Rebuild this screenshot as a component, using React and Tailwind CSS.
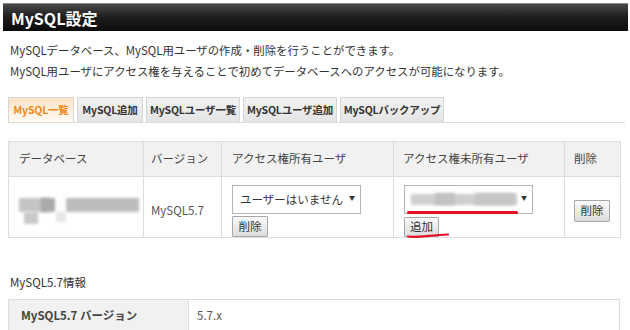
import React from "react";

const btn =
  "inline-flex items-center justify-center border border-[#a8a8a8] bg-gradient-to-b from-[#fafafa] to-[#dcdcdc] text-[11.5px] text-[#333] leading-none rounded-[1px]";

const tabs = [
  { label: "MySQL一覧", w: "w-[66px]", active: true },
  { label: "MySQL追加", w: "w-[66px]" },
  { label: "MySQLユーザ一覧", w: "w-[94px]" },
  { label: "MySQLユーザ追加", w: "w-[94px]" },
  { label: "MySQLバックアップ", w: "w-[104px]" },
];

const Blur = ({ className }) => (
  <span className={"absolute blur-[1.5px] " + className}></span>
);

export default function App() {
  return (
    <div className="w-[630px] h-[330px] overflow-hidden bg-white text-[#333] font-['Noto_Sans_CJK_JP',sans-serif]">
      {/* header bar */}
      <div className="pt-[3px] pl-[3px] pr-[2px]">
        <div className="h-[28px] flex items-center pl-[8px] bg-gradient-to-b from-[#4a4a4a] via-[#1c1c1c] to-[#0c0c0c] text-white font-bold text-[16px] border-t border-[#888]">
          MySQL設定
        </div>
      </div>

      <div className="pl-[10px] pt-[9px] text-[11.4px] leading-[21px] text-[#333] whitespace-nowrap">
        <p>MySQLデータベース、MySQL用ユーザの作成・削除を行うことができます。</p>
        <p>MySQL用ユーザにアクセス権を与えることで初めてデータベースへのアクセスが可能になります。</p>
      </div>

      {/* tabs */}
      <div className="mt-[15px] ml-[8px] mr-[5px] flex items-end gap-[3px] border-b border-[#dcdcdc]">
        {tabs.map((t) => (
          <div
            key={t.label}
            className={
              "h-[25px] flex items-center justify-center whitespace-nowrap text-[10.5px] tracking-[-0.2px] font-bold border border-b-0 border-[#d6d6d6] " +
              t.w +
              (t.active
                ? " bg-gradient-to-b from-[#fde4c6] to-[#fffaf3] text-[#ee8a1c]"
                : " bg-gradient-to-b from-[#f2f2f2] to-[#e4e4e4] text-[#333]")
            }
          >
            {t.label}
          </div>
        ))}
      </div>

      {/* main table */}
      <table className="mt-[18px] ml-[8px] w-[612px] border-collapse text-[11.5px] text-[#444] table-fixed">
        <colgroup>
          <col className="w-[135px]" />
          <col className="w-[78px]" />
          <col className="w-[172px]" />
          <col className="w-[171px]" />
          <col className="w-[56px]" />
        </colgroup>
        <thead>
          <tr className="h-[35px] bg-[#f1f1f1]">
            <th className="border border-[#dddddd] text-left font-normal pl-[10px]">データベース</th>
            <th className="border border-[#dddddd] text-left font-normal pl-[7px]">バージョン</th>
            <th className="border border-[#dddddd] text-left font-normal pl-[10px]">アクセス権所有ユーザ</th>
            <th className="border border-[#dddddd] text-left font-normal pl-[9px]">アクセス権未所有ユーザ</th>
            <th className="border border-[#dddddd] text-left font-normal pl-[9px]">削除</th>
          </tr>
        </thead>
        <tbody>
          <tr className="h-[60px]">
            <td className="border border-[#dddddd] pt-[8px] align-middle">
              <div className="relative h-[27px]">
                <Blur className="left-[10px] top-0 w-[30px] h-[14px] bg-[#c4c4c4]" />
                <Blur className="left-[32px] top-0 w-[14px] h-[14px] bg-[#aaaaaa]" />
                <Blur className="left-[57px] top-0 w-[73px] h-[14px] bg-[#bcbcbc]" />
                <Blur className="left-[15px] top-[14px] w-[14px] h-[12px] bg-[#c8c8c8]" />
                <Blur className="left-[47px] top-[14px] w-[10px] h-[10px] bg-[#e6e6e6]" />
              </div>
            </td>
            <td className="border border-[#dddddd] pt-[8px] pl-[7px] align-middle text-[#555]">MySQL5.7</td>
            <td className="border border-[#dddddd] pl-[10px] pt-[8px] align-top">
              <div className="w-[129px] h-[29px] border border-[#b4b4b4] bg-white flex items-center pl-[7px] pr-[5px] justify-between whitespace-nowrap text-[11.5px] text-[#333]">
                <span>ユーザーはいません</span>
                <span className="text-[6px] pb-[4px]">▼</span>
              </div>
              <div className={btn + " w-[36px] h-[21px] mt-[2px]"}>削除</div>
            </td>
            <td className="border border-[#dddddd] pl-[10px] pt-[8px] align-top">
              <div className="relative w-[129px] h-[29px] border border-[#b4b4b4] bg-white flex items-center justify-end pr-[5px]">
                <Blur className="left-[6px] top-[8px] w-[106px] h-[11px] bg-[#cfcfcf]" />
                <Blur className="left-[30px] top-[7px] w-[20px] h-[12px] bg-[#c2c2c2]" />
                <Blur className="left-[70px] top-[7px] w-[40px] h-[12px] bg-[#c6c6c6]" />
                <span className="text-[6px] pb-[4px] text-[#333]">▼</span>
                <span className="absolute left-[2px] top-[25px] w-[111px] h-[3px] rounded-full bg-[#e60d22]"></span>
              </div>
              <div className="relative w-[36px]">
                <div className={btn + " w-[35px] h-[20px] mt-[3px]"}>追加</div>
                <svg className="absolute left-[3px] top-[18px]" width="42" height="6" viewBox="0 0 42 6">
                  <path d="M1 4.5 C10 5.5 20 4 26 3.5 C32 3 37 2.5 41 2.5" stroke="#e60d22" strokeWidth="2.2" fill="none" strokeLinecap="round" />
                </svg>
              </div>
            </td>
            <td className="border border-[#dddddd] pl-[9px] pt-[8px] align-middle">
              <div className={btn + " w-[36px] h-[22px]"}>削除</div>
            </td>
          </tr>
        </tbody>
      </table>

      <p className="mt-[35px] pl-[10px] text-[11.5px] leading-[18px] text-[#333]">MySQL5.7情報</p>

      <table className="mt-[8px] ml-[8px] w-[612px] border-collapse text-[11.5px] table-fixed">
        <colgroup>
          <col className="w-[180px]" />
          <col />
        </colgroup>
        <tbody>
          <tr className="h-[32px]">
            <td className="border border-[#dddddd] bg-[#f1f1f1] pl-[12px] font-bold text-[#444]">MySQL5.7 バージョン</td>
            <td className="border border-[#dddddd] pl-[8px] text-[#555]">5.7.x</td>
          </tr>
        </tbody>
      </table>
    </div>
  );
}
